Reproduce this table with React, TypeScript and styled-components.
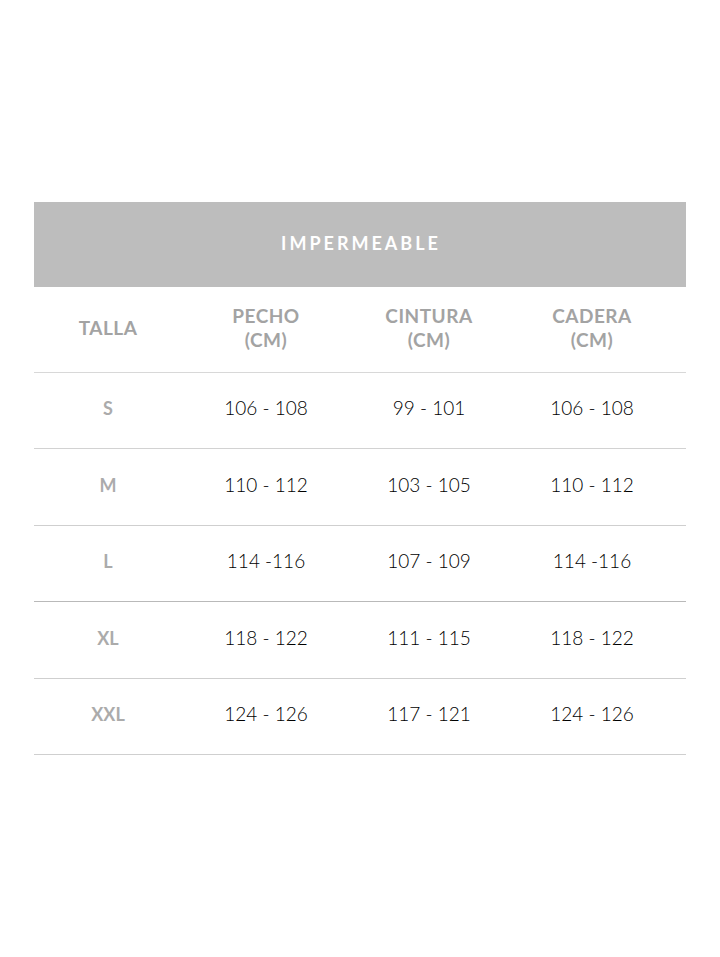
import React from "react";
import styled, { createGlobalStyle } from "styled-components";

const Global = createGlobalStyle`
  html, body { margin: 0; padding: 0; background: #ffffff; }
  body { font-family: Lato, "Liberation Sans", sans-serif; }
`;

const Page = styled.div`
  width: 720px;
  height: 957px;
  padding-top: 202px;
  box-sizing: border-box;
  display: flex;
  justify-content: flex-start;
`;

const Table = styled.div`
  margin-left: 34px;
  width: 652px;
  display: flex;
  flex-direction: column;
`;

const Banner = styled.div`
  height: 85px;
  background: #bdbdbd;
  display: flex;
  align-items: center;
  justify-content: center;
  color: #ffffff;
  font-family: Lato, "Liberation Sans", sans-serif;
  font-weight: 700;
  font-size: 18px;
  letter-spacing: 3px;
  padding-left: 2px;
  padding-bottom: 4px;
  box-sizing: border-box;
`;

const Row = styled.div<{ $h: number; $line: string }>`
  display: grid;
  grid-template-columns: 148px 168px 158px 168px 10px;
  height: ${(p) => p.$h}px;
  border-bottom: 1px solid ${(p) => p.$line};
  box-sizing: border-box;
  align-items: center;
`;

const HeadCell = styled.div`
  text-align: center;
  color: #a3a3a3;
  font-family: Lato, "Liberation Sans", sans-serif;
  font-weight: 700;
  font-size: 19px;
  line-height: 24px;
  letter-spacing: 0.5px;
  padding-bottom: 4px;
`;

const SizeCell = styled.div`
  text-align: center;
  color: #ababab;
  font-family: Lato, "Liberation Sans", sans-serif;
  font-weight: 700;
  font-size: 18px;
  padding-bottom: 5px;
`;

const ValueCell = styled.div`
  text-align: center;
  color: #000000;
  font-family: Lato, "Liberation Sans", sans-serif;
  font-weight: 300;
  font-size: 19px;
  padding-bottom: 6px;
`;

const rows = [
  { size: "S", v: ["106 - 108", "99 - 101", "106 - 108"], h: 76, line: "#d2d2d2" },
  { size: "M", v: ["110 - 112", "103 - 105", "110 - 112"], h: 77, line: "#cfcfcf" },
  { size: "L", v: ["114 -116", "107 - 109", "114 -116"], h: 76, line: "#b9b9b9" },
  { size: "XL", v: ["118 - 122", "111 - 115", "118 - 122"], h: 77, line: "#cfcfcf" },
  { size: "XXL", v: ["124 - 126", "117 - 121", "124 - 126"], h: 76, line: "#cfcfcf" },
];

export default function App() {
  return (
    <>
      <Global />
      <Page>
        <Table>
          <Banner>IMPERMEABLE</Banner>
          <Row $h={86} $line="#d8d8d8">
            <HeadCell>TALLA</HeadCell>
            <HeadCell>
              PECHO
              <br />
              (CM)
            </HeadCell>
            <HeadCell>
              CINTURA
              <br />
              (CM)
            </HeadCell>
            <HeadCell>
              CADERA
              <br />
              (CM)
            </HeadCell>
            <div />
          </Row>
          {rows.map((r) => (
            <Row key={r.size} $h={r.h} $line={r.line}>
              <SizeCell>{r.size}</SizeCell>
              {r.v.map((x, i) => (
                <ValueCell key={i}>{x}</ValueCell>
              ))}
              <div />
            </Row>
          ))}
        </Table>
      </Page>
    </>
  );
}
